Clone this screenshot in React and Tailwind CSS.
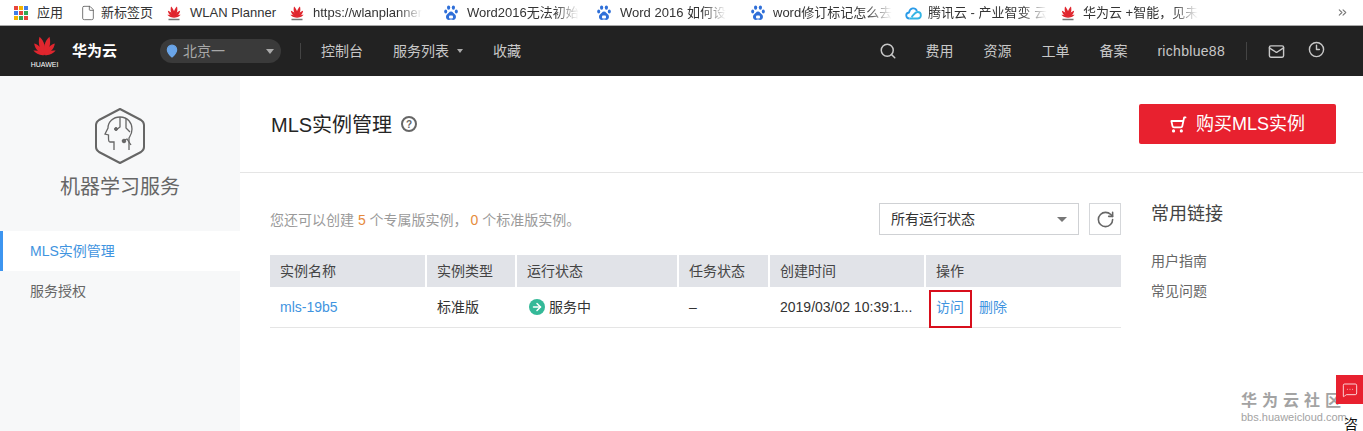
import { ChevronsRight, File, MapPin, Search, Mail, Clock3, ShoppingCart, RotateCw, ArrowRight, MessageSquareMore } from 'lucide-react'

function HuaweiLogo({ size = 16, label = false }) {
  const petals = [
    [-68, 0.62],
    [-42, 0.8],
    [-15, 0.98],
    [15, 0.98],
    [42, 0.8],
    [68, 0.62],
  ]
  return (
    <svg width={size} height={size} viewBox="0 0 32 32">
      {petals.map(([a, s]) => (
        <path
          key={a}
          d="M16 25 C11.500 18 12 8 16 2 C20 8 20.500 18 16 25 Z"
          fill="#e0262e"
          transform={`translate(16 25) rotate(${a}) scale(${s}) translate(-16 -25)`}
        />
      ))}
      {label && <rect x="5" y="27.500" width="22" height="3" fill="#777" />}
    </svg>
  )
}

function BaiduIcon() {
  return (
    <svg width="14" height="16" viewBox="0 0 14 16" fill="#2f6fd8">
      <ellipse cx="4.600" cy="2.600" rx="1.600" ry="2.200" />
      <ellipse cx="9.400" cy="2.600" rx="1.600" ry="2.200" />
      <ellipse cx="1.700" cy="6.400" rx="1.500" ry="2" />
      <ellipse cx="12.300" cy="6.400" rx="1.500" ry="2" />
      <path d="M7 6.500c2 0 2.500 2 4 3 1.600 1.200 1.400 5.500-2 5.500-1 0-1.300-.4-2-.4s-1 .4-2 .4c-3.400 0-3.600-4.300-2-5.500 1.500-1 2-3 4-3z" />
      <rect x="5" y="10.500" width="4" height="3" rx="1" fill="#fff" />
    </svg>
  )
}

function TencentIcon() {
  return (
    <svg width="17" height="14" viewBox="0 0 17 14" fill="none" strokeWidth="1.800">
      <path d="M4.500 12.500c-4 0-4.500-5.500-.5-6C5 2 10 .8 12 5" stroke="#2a9be8" />
      <path d="M4.500 12.500h8c4.500 0 4.500-6.500 0-6.500-2.500 0-3.500 2.500-6 5" stroke="#33b5e5" />
    </svg>
  )
}

function GridIcon() {
  const colors = ['#e8453c', '#f4b400', '#3f7de8', '#3f7de8', '#e8453c', '#34a853', '#f4b400', '#34a853', '#e8453c']
  return (
    <div className="grid grid-cols-3 gap-px w-[14px] h-[14px]">
      {colors.map((c, i) => (
        <span key={i} className="w-[4px] h-[4px]" style={{ background: c }} />
      ))}
    </div>
  )
}

function Bookmark({ icon, text, width, iconWidth = 24, fade }) {
  return (
    <div className="flex items-center shrink-0 h-full" style={{ width }}>
      <span className="flex items-center shrink-0" style={{ width: iconWidth }}>{icon}</span>
      <span
        className={`whitespace-nowrap text-[13px] text-[#333] ${fade ? '[mask-image:linear-gradient(to_right,black_78%,transparent)]' : ''}`}
      >
        {text}
      </span>
    </div>
  )
}

function RobotHex() {
  return (
    <svg width="52" height="58" viewBox="0 0 52 58" fill="none" stroke="#666">
      <path d="M26 2 L47 13 Q50 15 50 18 L50 40 Q50 43 47 45 L26 56 L5 45 Q2 43 2 40 L2 18 Q2 15 5 13 Z" strokeWidth="2" strokeLinejoin="round" />
      <path d="M20 43v-8h-4c-1.500 0-1.500-2-1.500-4V28l-3.500-1 3-6c0-6 5-11 12-11 8 0 12 6 12 12 0 5-2 7-3 9v12" strokeWidth="1.300" />
      <path d="M26 10v10l-4 3M32 12v9l4 4M28 34l5-2 4 6" strokeWidth="1.300" />
      <circle cx="22" cy="22" r="1.500" fill="#666" />
      <circle cx="30" cy="34" r="1.800" fill="#666" />
    </svg>
  )
}

const columns = [
  { title: '实例名称', width: 157 },
  { title: '实例类型', width: 90 },
  { title: '运行状态', width: 162 },
  { title: '任务状态', width: 91 },
  { title: '创建时间', width: 156 },
  { title: '操作', width: 195 },
]

export default function App() {
  return (
    <div className="relative w-[1363px] h-[431px] overflow-hidden bg-white font-['Liberation_Sans','Noto_Sans_CJK_SC',sans-serif]">
      {/* 书签栏 */}
      <div className="flex h-[26px] items-center pl-[14px] border-b border-[#a9a9a9] bg-white">
        <Bookmark width={66} iconWidth={23} icon={<GridIcon />} text="应用" />
        <Bookmark width={86} iconWidth={21} icon={<File size={16} strokeWidth={1.200} color="#555" />} text="新标签页" />
        <Bookmark width={123} icon={<HuaweiLogo label />} text="WLAN Planner" />
        <Bookmark width={155} icon={<HuaweiLogo label />} text="https://wlanplanner" fade />
        <Bookmark width={153} iconWidth={23} icon={<BaiduIcon />} text="Word2016无法初始" fade />
        <Bookmark width={154} iconWidth={23} icon={<BaiduIcon />} text="Word 2016 如何设" fade />
        <Bookmark width={154} iconWidth={22} icon={<BaiduIcon />} text="word修订标记怎么去" fade />
        <Bookmark width={155} iconWidth={23} icon={<TencentIcon />} text="腾讯云 - 产业智变 云" fade />
        <Bookmark width={150} iconWidth={23} icon={<HuaweiLogo label />} text="华为云 +智能，见未" fade />
        <ChevronsRight size={13} color="#777" className="ml-auto mr-[14px]" />
      </div>

      {/* 顶部导航 */}
      <div className="flex h-[50px] items-center bg-[#222222] text-[14px] text-[#c8c8c8]">
        <div className="ml-[31px] flex w-[27px] flex-col items-center">
          <HuaweiLogo size={27} />
          <span className="whitespace-nowrap text-[7px] leading-[7px] text-white">HUAWEI</span>
        </div>
        <span className="ml-[14px] text-[15px] font-bold text-white">华为云</span>
        <div className="ml-[43px] flex h-[24px] w-[121px] items-center rounded-full bg-[#3a3a3a] pl-[5px]">
          <MapPin size={14} fill="#6aa5e8" color="#6aa5e8" />
          <span className="ml-[4px] text-[#a8a8a8]">北京一</span>
          <span className="ml-auto mr-[7px] border-x-[4px] border-t-[5px] border-x-transparent border-t-[#aaa]" />
        </div>
        <span className="ml-[19px] h-[16px] w-px bg-[#444]" />
        <span className="ml-[20px]">控制台</span>
        <span className="ml-[30px]">服务列表</span>
        <span className="ml-[8px] border-x-[3px] border-t-[4px] border-x-transparent border-t-[#aaa]" />
        <span className="ml-[30px]">收藏</span>

        <div className="ml-auto flex items-center">
          <Search size={18} strokeWidth={2} className="mr-[28px]" />
          <span className="mr-[30px]">费用</span>
          <span className="mr-[30px]">资源</span>
          <span className="mr-[30px]">工单</span>
          <span className="mr-[30px]">备案</span>
          <span className="tracking-[0.3px]">richblue88</span>
          <span className="ml-[21px] h-[18px] w-px bg-[#444]" />
          <Mail size={17} strokeWidth={2} className="ml-[21px]" />
          <Clock3 size={17} strokeWidth={2} className="ml-[23px] mr-[38px] mb-[3px]" />
        </div>
      </div>

      <div className="flex h-[355px]">
        {/* 侧边栏 */}
        <aside className="w-[240px] shrink-0 bg-[#f7f8f9]">
          <div className="flex flex-col items-center pt-[31px]">
            <RobotHex />
            <div className="mt-[8px] text-[20px] leading-[28px] text-[#666]">机器学习服务</div>
          </div>
          <div className="mt-[30px] flex h-[40px] items-center border-l-[3px] border-[#3d95f0] bg-white pl-[27px] text-[14px] text-[#3f94e0]">
            MLS实例管理
          </div>
          <div className="flex h-[40px] items-center pl-[30px] text-[14px] text-[#666]">服务授权</div>
        </aside>

        <main className="min-w-0 flex-1">
          <div className="flex h-[97px] items-start border-b border-[#e5e5e5] pl-[31px] pr-[27px]">
            <h1 className="mt-[35px] text-[20px] leading-[28px] text-[#252525]">MLS实例管理</h1>
            <span className="ml-[9px] mt-[40px] flex h-[16px] w-[16px] items-center justify-center rounded-full border-2 border-[#666] text-[10px] font-bold text-[#666]">
              ?
            </span>
            <button className="ml-auto mt-[28px] flex h-[40px] w-[197px] items-center justify-center rounded-[2px] bg-[#e8212f] text-[18px] text-white">
              <ShoppingCart size={17} strokeWidth={2.500} className="mr-[9px] -scale-x-100" />
              购买MLS实例
            </button>
          </div>

          <div className="flex pl-[30px]">
            <div className="w-[851px]">
              <div className="mt-[30px] flex items-center">
                <p className="mt-[2px] text-[14px] text-[#9a9a9a]">
                  您还可以创建 <span className="text-[#e58a3c]">5</span> 个专属版实例，
                  <span className="ml-[3px] text-[#e58a3c]">0</span> 个标准版实例。
                </p>
                <div className="ml-auto flex h-[32px] w-[200px] items-center border border-[#cfd1d4] pl-[11px] text-[14px] text-[#333]">
                  所有运行状态
                  <span className="ml-auto mr-[11px] border-x-[5px] border-t-[5px] border-x-transparent border-t-[#777]" />
                </div>
                <div className="ml-[10px] flex h-[32px] w-[32px] items-center justify-center border border-[#d5d7da]">
                  <RotateCw size={19} strokeWidth={2} color="#666" />
                </div>
              </div>

              <div className="mt-[20px] flex h-[32px] bg-[#e1e3e8] text-[14px] text-[#444]">
                {columns.map((c, i) => (
                  <div
                    key={c.title}
                    className={`flex items-center pl-[10px] ${i < 5 ? 'border-r-2 border-white' : ''}`}
                    style={{ width: c.width }}
                  >
                    {c.title}
                  </div>
                ))}
              </div>
              <div className="relative flex h-[41px] items-center border-b border-[#e5e5e5] text-[14px] text-[#333]">
                <div className="w-[157px] pl-[10px] text-[#3f94e0]">mls-19b5</div>
                <div className="w-[90px] pl-[10px]">标准版</div>
                <div className="flex w-[162px] items-center pl-[12px]">
                  <span className="flex h-[16px] w-[16px] items-center justify-center rounded-full bg-[#34b998]">
                    <ArrowRight size={12} strokeWidth={3} color="white" />
                  </span>
                  <span className="ml-[4px]">服务中</span>
                </div>
                <div className="w-[91px] pl-[10px]">–</div>
                <div className="w-[156px] pl-[10px] whitespace-nowrap">2019/03/02 10:39:1...</div>
                <div className="flex w-[195px] pl-[10px] text-[#3f94e0]">
                  <span>访问</span>
                  <span className="ml-[15px]">删除</span>
                </div>
                <span className="absolute left-[659px] top-[3px] h-[38px] w-[43px] border-[2px] border-[#d80f1c]" />
              </div>
            </div>

            <div className="ml-[30px] text-[#666]">
              <h2 className="mt-[28px] text-[18px] leading-[26px] text-[#444]">常用链接</h2>
              <div className="mt-[24px] text-[14px]">用户指南</div>
              <div className="mt-[9px] text-[14px]">常见问题</div>
            </div>
          </div>
        </main>
      </div>

      {/* 水印和悬浮按钮 */}
      <div className="absolute left-[1241px] top-[391px] text-[#a3a3a3]">
        <div className="whitespace-nowrap text-[16px] font-bold leading-[20px] tracking-[5px]">华为云社区</div>
        <div className="whitespace-nowrap text-[11px] leading-[13px]">bbs.huaweicloud.com</div>
      </div>
      <div className="absolute left-[1336px] top-[375px] flex h-[29px] w-[27px] items-center justify-center bg-[#e8212f]">
        <MessageSquareMore size={16} strokeWidth={1.200} color="white" />
      </div>
      <div className="absolute left-[1344px] top-[414px] text-[14px] text-[#111]">咨</div>
    </div>
  )
}
